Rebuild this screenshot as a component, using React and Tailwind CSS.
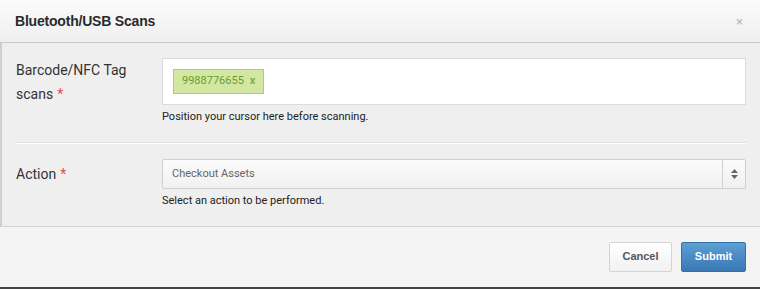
import React from "react";

const Required = () => <span className="text-[#e0504b] ml-1">*</span>;

const FormRow = ({ label, help, children }) => (
  <div className="flex">
    <div className="w-[160px] pl-[14px] pr-2 text-[14px] leading-[24px] text-[#333]">
      {label}
    </div>
    <div className="flex-1 pr-[14px]">
      {children}
      <p className="mt-[5px] text-[11px] leading-[14px] text-[#222]">{help}</p>
    </div>
  </div>
);

export default function App() {
  return (
    <div
      className="w-[760px] h-[289px] flex flex-col bg-[#f4f4f4] border-b-2 border-[#444]"
      style={{ fontFamily: "Roboto, 'Liberation Sans', sans-serif" }}
    >
      <div className="h-[43px] flex items-center justify-between px-[15px] bg-gradient-to-b from-[#fbfbfb] to-[#efefef] border-b border-[#c9c9c9]">
        <h3
          className="text-[14px] font-bold text-[#2a2a2a] tracking-[-0.2px]"
          style={{ fontFamily: "'Liberation Sans', Arial, sans-serif" }}
        >
          Bluetooth/USB Scans
        </h3>
        <button className="text-[#b8b8b8] text-[13px] leading-none mr-[2px]">×</button>
      </div>

      <div className="h-[184px] bg-[#efefef] border-l-2 border-[#cfcfcf] border-b border-b-[#d4d4d4] pt-[15px]">
        <FormRow
          label={
            <>
              Barcode/NFC Tag
              <br />
              scans
              <Required />
            </>
          }
          help="Position your cursor here before scanning."
        >
          <div className="h-[47px] bg-white border border-[#dcdcdc] flex items-center px-[10px]">
            <span className="h-[25px] flex items-center px-[8px] bg-[#d2e8a2] border border-[#a9d363] text-[11px] text-[#6b9b2f]">
              9988776655
              <span className="ml-[6px] font-bold text-[#7cb33a]">x</span>
            </span>
          </div>
        </FormRow>

        <div className="ml-[14px] mr-[14px] mt-[18px] mb-[15px] border-t border-[#e2e2e2] border-b border-b-white" />

        <FormRow
          label={
            <span className="leading-[30px]">
              Action
              <Required />
            </span>
          }
          help="Select an action to be performed."
        >
          <div className="h-[30px] flex items-stretch border border-[#d0d0d0] rounded-[2px] bg-gradient-to-b from-[#fbfbfb] to-[#f1f1f1]">
            <span className="flex-1 flex items-center pl-[9px] text-[11px] text-[#666]">
              Checkout Assets
            </span>
            <span className="w-[23px] border-l border-[#d0d0d0] flex flex-col items-center justify-center gap-[2px]">
              <svg width="7" height="4" viewBox="0 0 7 4">
                <path d="M0 4 L3.5 0 L7 4 Z" fill="#666" />
              </svg>
              <svg width="7" height="4" viewBox="0 0 7 4">
                <path d="M0 0 L3.5 4 L7 0 Z" fill="#666" />
              </svg>
            </span>
          </div>
        </FormRow>
      </div>

      <div
        className="flex-1 flex items-center justify-end gap-[9px] pr-[14px] pb-[1px]"
        style={{ fontFamily: "'Liberation Sans', Arial, sans-serif" }}
      >
        <button className="h-[30px] w-[63px] bg-gradient-to-b from-white to-[#f2f2f2] border border-[#d4d4d4] rounded-[2px] text-[11px] font-bold text-[#555]">
          Cancel
        </button>
        <button className="h-[30px] w-[65px] bg-gradient-to-b from-[#5b9fd4] to-[#3b78b4] border border-[#3670a8] rounded-[2px] text-[11px] font-bold text-white">
          Submit
        </button>
      </div>
    </div>
  );
}
